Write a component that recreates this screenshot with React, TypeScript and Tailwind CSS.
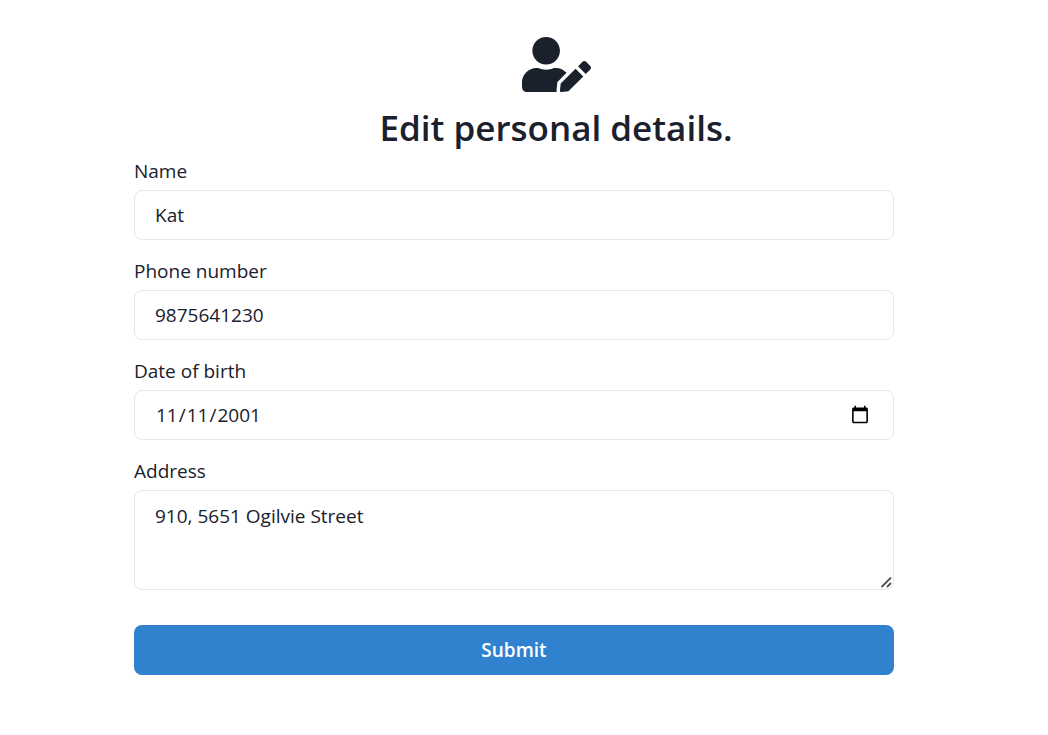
import { useState, type ReactNode } from "react";
import { FaUserEdit } from "react-icons/fa";

const control =
  "block w-full rounded-lg border border-[#e2e8f0] bg-white px-5 text-[19px] text-[#1a202c] outline-none focus:border-[#3182ce]";

function Field({ id, label, children }: { id: string; label: string; children: ReactNode }) {
  return (
    <div>
      <label htmlFor={id} className="mb-1 block leading-[30px]">
        {label}
      </label>
      {children}
    </div>
  );
}

export default function App() {
  const [name, setName] = useState("Kat");
  const [phone, setPhone] = useState("9875641230");
  const [birth, setBirth] = useState("2001-11-11");
  const [address, setAddress] = useState("910, 5651 Ogilvie Street");

  return (
    <main className="min-h-screen bg-white pt-[30px] pr-10 pb-5 pl-5 font-['Open_Sans','Noto_Sans',sans-serif] text-[19px] text-[#1a202c]">
      <header className="ml-[84px] flex flex-col items-center">
        <FaUserEdit className="size-[69px]" aria-hidden="true" />
        <h1 className="text-[35px] leading-[57px] font-semibold">Edit personal details.</h1>
      </header>
      <form
        className="mx-auto flex w-full max-w-[760px] flex-col gap-4"
        onSubmit={(event) => event.preventDefault()}
      >
        <Field id="name" label="Name">
          <input id="name" className={`${control} h-[50px]`} value={name} onChange={(e) => setName(e.target.value)} />
        </Field>
        <Field id="phone" label="Phone number">
          <input id="phone" type="tel" className={`${control} h-[50px]`} value={phone} onChange={(e) => setPhone(e.target.value)} />
        </Field>
        <Field id="birth" label="Date of birth">
          <input
            id="birth"
            type="date"
            className={`${control} h-[50px] [&::-webkit-calendar-picker-indicator]:mr-px [&::-webkit-calendar-picker-indicator]:size-5`}
            value={birth}
            onChange={(e) => setBirth(e.target.value)}
          />
        </Field>
        <Field id="address" label="Address">
          <div className="relative">
            <textarea
              id="address"
              className={`${control} h-[100px] resize-y py-[10px] leading-[30px] [&::-webkit-resizer]:bg-transparent`}
              value={address}
              onChange={(e) => setAddress(e.target.value)}
            />
            <svg
              className="pointer-events-none absolute right-[2px] bottom-[2px] size-[11px]"
              viewBox="0 0 11 11"
              fill="none"
              stroke="#4f4f4f"
              strokeWidth="1.8"
              aria-hidden="true"
            >
              <path d="M.5 10 10 .5M6 10l4-4" />
            </svg>
          </div>
        </Field>
        <button type="submit" className="mt-[19px] h-[50px] rounded-lg bg-[#3182ce] font-semibold text-white hover:bg-[#2b6cb0]">
          Submit
        </button>
      </form>
    </main>
  );
}
